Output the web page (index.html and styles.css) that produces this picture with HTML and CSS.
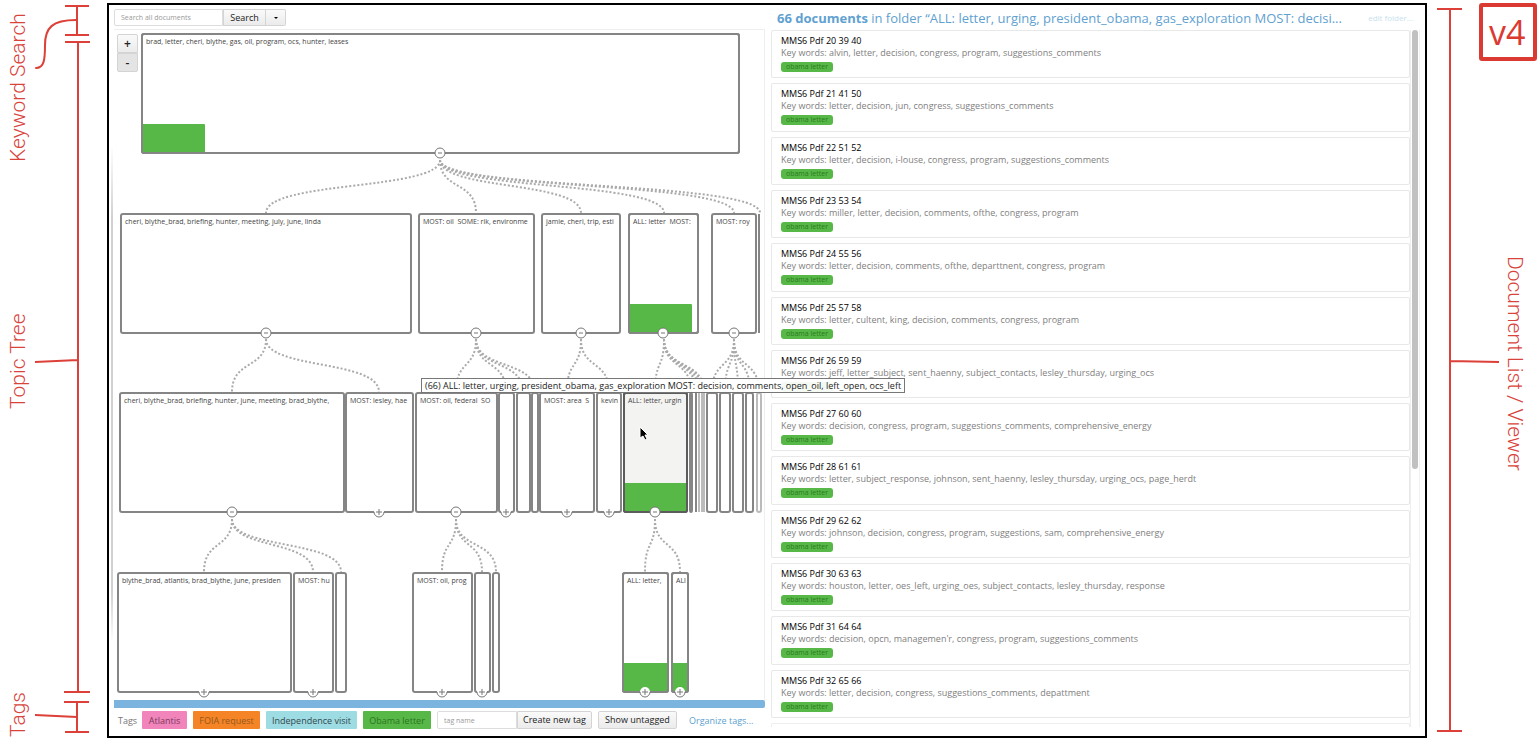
FILE: index.html
```html
<!DOCTYPE html>
<html lang="en">
<head>
<meta charset="utf-8">
<title>Topic tree and document list</title>
<link rel="stylesheet" href="styles.css">
</head>
<body>
<div class="page">
  <svg class="gutter" aria-label="Left annotations">
    <g class="bracket">
      <path d="M65 6H89M77 6V35M65 35H89"/>
      <path d="M76 20C52 20 45 28 45 45C45 60 44 68 36 68" stroke-linecap="round"/>
      <path d="M65 42H90M78 42V692M64 692H90M78 360L35 362"/>
      <path d="M64 702H89M77 702V732M65 732H89M77 717L35 715"/>
    </g>
    <text class="note" transform="translate(25 162) rotate(-90)">Keyword Search</text>
    <text class="note" transform="translate(25 409) rotate(-90)">Topic Tree</text>
    <text class="note" transform="translate(25 737) rotate(-90)">Tags</text>
  </svg>

  <main class="app">
    <section class="tree-pane">
      <form class="search">
        <input class="field search-field" type="text" aria-label="Search all documents" placeholder="Search all documents">
        <button class="btn search-btn" type="button">Search</button>
        <button class="btn caret-btn" type="button" aria-label="Search options"><svg width="6" height="4"><path d="M1 1H5L3 3Z"/></svg></button>
      </form>
      <div class="tree">
        <svg class="canvas" id="tree" aria-label="Topic tree"></svg>
        <div class="zoom">
          <button class="btn zoom-btn" type="button">+</button>
          <button class="btn zoom-btn zoom-out" type="button">-</button>
        </div>
        <div class="tooltip">(66) ALL: letter, urging, president_obama, gas_exploration MOST: decision, comments, open_oil, left_open, ocs_left</div>
      </div>
      <div class="hscroll"></div>
      <div class="tags">
        <span class="tags-label">Tags</span>
        <button class="tag pink" type="button">Atlantis</button>
        <button class="tag orange" type="button">FOIA request</button>
        <button class="tag cyan" type="button">Independence visit</button>
        <button class="tag green" type="button">Obama letter</button>
        <div class="new-tag">
          <input class="field tag-field" type="text" aria-label="Tag name" placeholder="tag name">
          <button class="btn create-btn" type="button">Create new tag</button>
        </div>
        <button class="btn untagged-btn" type="button">Show untagged</button>
        <a class="organize" href="#">Organize tags...</a>
      </div>
    </section>

    <section class="docs-pane">
      <header class="docs-head">
        <h1><b>66 documents</b> in folder “ALL: letter, urging, president_obama, gas_exploration MOST: decisi...</h1>
        <a class="edit" href="#">edit folder...</a>
      </header>
      <div class="docs-body">
        <div class="docs">
          <div class="cards">
            <article class="card"><h2>MMS6 Pdf 20 39 40</h2><p>Key words: alvin, letter, decision, congress, program, suggestions_comments</p><span class="pill">obama letter</span></article>
            <article class="card"><h2>MMS6 Pdf 21 41 50</h2><p>Key words: letter, decision, jun, congress, suggestions_comments</p><span class="pill">obama letter</span></article>
            <article class="card"><h2>MMS6 Pdf 22 51 52</h2><p>Key words: letter, decision, i-louse, congress, program, suggestions_comments</p><span class="pill">obama letter</span></article>
            <article class="card"><h2>MMS6 Pdf 23 53 54</h2><p>Key words: miller, letter, decision, comments, ofthe, congress, program</p><span class="pill">obama letter</span></article>
            <article class="card"><h2>MMS6 Pdf 24 55 56</h2><p>Key words: letter, decision, comments, ofthe, departtnent, congress, program</p><span class="pill">obama letter</span></article>
            <article class="card"><h2>MMS6 Pdf 25 57 58</h2><p>Key words: letter, cultent, king, decision, comments, congress, program</p><span class="pill">obama letter</span></article>
            <article class="card"><h2>MMS6 Pdf 26 59 59</h2><p>Key words: jeff, letter_subject, sent_haenny, subject_contacts, lesley_thursday, urging_ocs</p><span class="pill">obama letter</span></article>
            <article class="card"><h2>MMS6 Pdf 27 60 60</h2><p>Key words: decision, congress, program, suggestions_comments, comprehensive_energy</p><span class="pill">obama letter</span></article>
            <article class="card"><h2>MMS6 Pdf 28 61 61</h2><p>Key words: letter, subject_response, johnson, sent_haenny, lesley_thursday, urging_ocs, page_herdt</p><span class="pill">obama letter</span></article>
            <article class="card"><h2>MMS6 Pdf 29 62 62</h2><p>Key words: johnson, decision, congress, program, suggestions, sam, comprehensive_energy</p><span class="pill">obama letter</span></article>
            <article class="card"><h2>MMS6 Pdf 30 63 63</h2><p>Key words: houston, letter, oes_left, urging_oes, subject_contacts, lesley_thursday, response</p><span class="pill">obama letter</span></article>
            <article class="card"><h2>MMS6 Pdf 31 64 64</h2><p>Key words: decision, opcn, managemen'r, congress, program, suggestions_comments</p><span class="pill">obama letter</span></article>
            <article class="card"><h2>MMS6 Pdf 32 65 66</h2><p>Key words: letter, decision, congress, suggestions_comments, depattment</p><span class="pill">obama letter</span></article>
          </div>
          <div class="card-peek"></div>
        </div>
        <div class="scrollbar"><div class="thumb"></div></div>
      </div>
    </section>
  </main>

  <svg class="gutter" aria-label="Right annotations">
    <g class="bracket">
      <path d="M9 9H34M22 9V731M9 731H34M22 361L71 362"/>
    </g>
    <rect class="version-box" x="53" y="5" width="54" height="54" rx="1"/>
    <text class="version" x="61" y="45">v4</text>
    <text class="note" transform="translate(80 256) rotate(90)">Document List / Viewer</text>
  </svg>
</div>
<script src="tree.js"></script>
</body>
</html>
```

FILE: styles.css
```css
* { box-sizing: border-box; }

body {
  margin: 0;
  background: #fff;
  font-family: "Open Sans", "Noto Sans", sans-serif;
  font-size: 8px;
  color: #222;
}

button, input { font-family: inherit; margin: 0; }
a { text-decoration: none; }

.page {
  display: grid;
  grid-template-columns: 106px minmax(0, 1fr) 109px;
  height: 100vh;
  min-height: 720px;
}

/* Annotations on both sides */
.gutter { display: block; width: 100%; height: 100%; }
.bracket { fill: none; stroke: #dc4038; stroke-width: 2; }
.note { font-family: Roboto, "Liberation Sans", sans-serif; font-weight: 300; font-size: 21px; fill: #d8443c; }
.version-box { fill: none; stroke: #da3a32; stroke-width: 4; }
.version { font-size: 34px; fill: #da3a32; }

/* Application frame */
.app {
  display: grid;
  grid-template-columns: minmax(0, 656fr) minmax(0, 660fr);
  margin: 3px 1px;
  border: 2px solid #000;
  overflow: hidden;
}

.tree-pane {
  display: flex;
  flex-direction: column;
  padding: 4px 0 7px 5px;
  min-width: 0;
  background: linear-gradient(transparent, #d0d0d0 15%, #d0d0d0 90%, transparent) 2px 60% / 2px 68% no-repeat;
}

.search { display: flex; height: 17px; margin-bottom: 3px; }
.field {
  border: 1px solid #ddd;
  border-radius: 2px 0 0 2px;
  padding: 0 6px;
  font-size: 7px;
  color: #333;
  background: #fff;
}
.field::placeholder { color: #999; opacity: 1; }
.search-field { width: 109px; }
.btn {
  border: 1px solid #d4d4d4;
  border-radius: 2px;
  background: linear-gradient(#fafafa, #ebebeb);
  color: #222;
  font-size: 9px;
  line-height: 14px;
  padding: 0;
  text-align: center;
  white-space: nowrap;
}
.search-btn { width: 43px; border-radius: 0; }
.caret-btn { width: 20px; border-left: 0; border-radius: 0 2px 2px 0; display: grid; place-items: center; }

.tree {
  position: relative;
  flex: 1;
  min-height: 0;
  border-top: 1px solid #eee;
  border-right: 1px solid #eee;
}
.canvas { display: block; width: 100%; height: 100%; }
.zoom { position: absolute; left: 3px; top: 4px; display: flex; flex-direction: column; }
.zoom-btn { width: 21px; height: 19px; border-radius: 2px 2px 0 0; font-size: 12px; font-weight: 600; }
.zoom-out { background: #e4e4e4; border-radius: 0 0 2px 2px; }
.tooltip {
  position: absolute;
  z-index: 2;
  left: 307px;
  top: 348px;
  padding: 0 3px;
  border: 1px solid #777;
  background: rgba(255, 255, 255, 0.94);
  font-size: 9px;
  line-height: 13px;
  color: #222;
  white-space: nowrap;
}

/* Tree drawing */
.node { fill: #fff; stroke: #858585; stroke-width: 2; }
.node.outline { fill: none; }
.node.selected { fill: #f3f3f1; stroke: #5c5c5c; }
.node.selected.outline { fill: none; }
.node.faint { stroke: #bbb; }
.share { fill: #57b847; }
.topic { font-size: 7px; fill: #444; white-space: pre; }
.link { fill: none; stroke: #aaa; stroke-width: 2; stroke-dasharray: 2 2; }
.knob { fill: #fff; stroke: #777; stroke-width: 1; }
.knob-fill { fill: #fff; }
.knob-line { fill: none; stroke: #777; stroke-width: 1; }
.pointer { fill: #000; stroke: #fff; stroke-width: 1; }

.hscroll { height: 8px; border-radius: 0 2px 2px 0; background: #7bb4df; }

.tags { display: flex; align-items: center; height: 18px; margin-top: 3px; gap: 6px; padding-left: 4px; white-space: nowrap; }
.tags-label { width: 18px; color: #777; font-size: 9px; }
.tag { height: 18px; border: 0; border-radius: 1px; padding: 0; font-size: 9px; text-align: center; }
.pink { width: 45px; background: #f184bb; color: #7c3a5c; }
.orange { width: 67px; background: #f58427; color: #94581c; }
.cyan { width: 91px; background: #9edce3; color: #33484c; }
.green { width: 68px; background: #57b847; color: #2c7422; }
.new-tag { display: flex; height: 18px; }
.tag-field { width: 80px; }
.create-btn { width: 75px; border-radius: 0 2px 2px 0; }
.untagged-btn { width: 79px; height: 18px; }
.organize { margin-left: 6px; color: #5b9fd0; font-size: 9px; }

/* Document list */
.docs-pane { display: flex; flex-direction: column; min-width: 0; padding: 0 5px 9px 6px; }
.docs-head { display: flex; align-items: center; justify-content: space-between; height: 25px; padding: 0 7px 0 6px; gap: 8px; }
.docs-head h1 {
  margin: 0;
  overflow: hidden;
  text-overflow: ellipsis;
  white-space: nowrap;
  font-size: 13px;
  line-height: 18px;
  font-weight: 400;
  color: #5fa1d0;
}
.edit { color: #c8e2ef; font-size: 8px; white-space: nowrap; }
.docs-body { display: flex; flex: 1; min-height: 0; gap: 1px; }
.docs { display: flex; flex-direction: column; flex: 1; min-width: 0; gap: 5px; border-right: 1px solid #eee; }
.cards { display: grid; flex: 1; grid-auto-rows: minmax(0, 1fr); gap: 5px; }
.card { border: 1px solid #e8e8e8; border-radius: 2px; padding: 4px 9px 0; overflow: hidden; }
.card h2 { margin: 0; font-size: 9px; line-height: 12px; font-weight: 400; color: #000; }
.card p { margin: 0 0 3px; font-size: 9px; line-height: 12px; color: #808080; }
.pill {
  display: block;
  width: 52px;
  border-radius: 3px;
  background: #57b847;
  color: #2a7a20;
  font-size: 7px;
  line-height: 10px;
  text-align: center;
}
.card-peek { height: 4px; border: 1px solid #eee; border-bottom: 0; border-radius: 2px 2px 0 0; }
.scrollbar { width: 8px; border-right: 1px solid #f2f2f2; }
.thumb { width: 6px; height: 63%; border-radius: 3px; background: #c1c1c1; }
```

FILE: tree.js
```js
(function () {
  var NS = 'http://www.w3.org/2000/svg';
  var HEIGHT = 119;
  var ORIGIN = [114, 30];

  // Each node: left, right, label, options
  var levels = [
    { top: 34, nodes: [[142, 739, 'brad, letter, cheri, blythe, gas, oil, program, ocs, hunter, leases', { share: 63, knob: '-' }]] },
    { top: 214, nodes: [
      [121, 411, 'cheri, blythe_brad, briefing, hunter, meeting, july, june, linda', { knob: '-' }],
      [419, 534, 'MOST: oil  SOME: rik, environme', { knob: '-' }],
      [542, 620, 'jamie, cheri, trip, esti', { knob: '-' }],
      [629, 698, 'ALL: letter  MOST:', { share: 63, knob: '-' }],
      [712, 756, 'MOST: roy', { knob: '-' }],
      [759, 759, '', {}]] },
    { top: 393, nodes: [
      [120, 344, 'cheri, blythe_brad, briefing, hunter, june, meeting, brad_blythe,', { knob: '-' }],
      [346, 413, 'MOST: lesley, hae', { knob: '+' }],
      [416, 497, 'MOST: oil, federal  SO', { knob: '-' }],
      [499, 514, '', { knob: '+' }],
      [517, 530, '', {}],
      [532, 538, '', {}],
      [540, 594, 'MOST: area  S', { knob: '+' }],
      [597, 621, 'kevin', { knob: '+' }],
      [690, 692, '', {}],
      [696, 696, '', {}],
      [699, 699, '', { cls: 'faint' }],
      [702, 702, '', { cls: 'faint' }],
      [704, 704, '', { cls: 'faint' }],
      [707, 717, '', {}],
      [720, 730, '', {}],
      [733, 743, '', {}],
      [746, 753, '', {}],
      [757, 761, '', { cls: 'faint' }],
      [624, 687, 'ALL: letter, urgin', { share: 63, knob: '-', cls: 'selected' }]] },
    { top: 573, nodes: [
      [118, 291, 'blythe_brad, atlantis, brad_blythe, june, presiden', { knob: '+' }],
      [294, 333, 'MOST: hu', { knob: '+' }],
      [336, 346, '', {}],
      [413, 472, 'MOST: oil, prog', { knob: '+' }],
      [475, 490, '', { knob: '+' }],
      [493, 499, '', {}],
      [623, 668, 'ALL: letter,', { share: 45, knob: '+' }],
      [672, 688, 'ALl', { share: 16, knob: '+' }]] }
  ];

  // Parent centre, parent bottom, child centres, child top
  var links = [
    [440, 160, [266, 476, 581, 664, 734, 760], 213],
    [266, 339, [232, 379], 392],
    [476, 339, [456, 506, 523, 535], 392],
    [581, 339, [567, 609], 392],
    [664, 339, [655, 691, 696, 699, 702, 704], 392],
    [734, 339, [712, 725, 738, 750, 759], 392],
    [232, 519, [204, 313, 341], 572],
    [456, 519, [442, 482, 496], 572],
    [655, 519, [645, 680], 572]
  ];

  function el(parent, name, attrs) {
    var e = document.createElementNS(NS, name);
    for (var k in attrs) e.setAttribute(k, attrs[k]);
    parent.appendChild(e);
    return e;
  }

  var svg = document.getElementById('tree');
  var root = el(svg, 'g', { transform: 'translate(' + -ORIGIN[0] + ' ' + -ORIGIN[1] + ')' });

  links.forEach(function (l) {
    l[2].forEach(function (x) {
      var mid = (l[1] + l[3]) / 2;
      el(root, 'path', { 'class': 'link', d: 'M' + l[0] + ' ' + l[1] + 'C' + l[0] + ' ' + (mid + 4) + ' ' + x + ' ' + (mid - 6) + ' ' + x + ' ' + l[3] });
    });
  });

  levels.forEach(function (level) {
    level.nodes.forEach(function (n) {
      var x = n[0], w = n[1] - n[0], o = n[3], y = level.top, bottom = y + HEIGHT;
      var cls = 'node ' + (o.cls || '');
      if (w === 0) {
        el(root, 'path', { 'class': cls, d: 'M' + x + ' ' + y + 'V' + bottom });
        return;
      }
      el(root, 'rect', { 'class': cls, x: x, y: y, width: w, height: HEIGHT, rx: 2 });
      if (o.share) {
        el(root, 'rect', { 'class': 'share', x: x, y: y + 90, width: Math.min(o.share, w), height: 29, rx: 1 });
        el(root, 'rect', { 'class': cls + ' outline', x: x, y: y, width: w, height: HEIGHT, rx: 2 });
      }
      if (n[2]) {
        var box = el(root, 'svg', { x: x + 3, y: y + 1, width: w - 4, height: 14 });
        el(box, 'text', { 'class': 'topic', x: 1, y: 9 }).textContent = n[2];
      }
    });
    level.nodes.forEach(function (n) {
      var k = n[3].knob, cx = Math.floor((n[0] + n[1]) / 2), cy = level.top + HEIGHT;
      if (!k) return;
      if (k === '-') {
        el(root, 'circle', { 'class': 'knob', cx: cx, cy: cy, r: 5 });
        el(root, 'path', { 'class': 'knob-line', d: 'M' + (cx - 2) + ' ' + cy + 'h4' });
      } else {
        el(root, 'circle', { 'class': 'knob-fill', cx: cx, cy: cy, r: 5 });
        el(root, 'path', { 'class': 'knob-line', d: 'M' + (cx - 5) + ' ' + cy + 'a5 5 0 0 0 10 0M' + (cx - 3) + ' ' + cy + 'h6M' + cx + ' ' + (cy - 3) + 'v6' });
      }
    });
  });

  el(root, 'path', { 'class': 'pointer', d: 'M640 427V438L643 436L645 440L647 439L645 435H648Z' });
})();
```
